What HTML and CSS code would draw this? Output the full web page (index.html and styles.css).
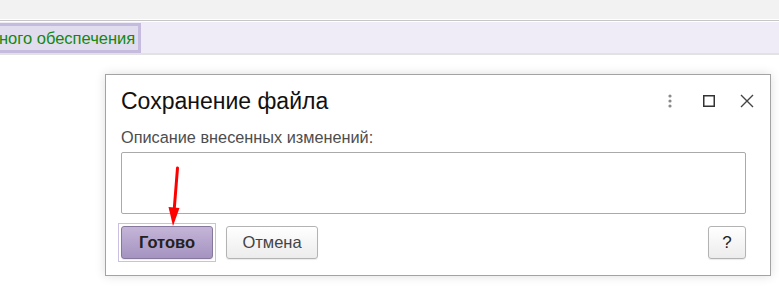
FILE: index.html
```html
<!DOCTYPE html>
<html lang="ru">
<head>
<meta charset="utf-8">
<link rel="stylesheet" href="styles.css">
</head>
<body>
<div class="topbar"></div>
<div class="band">
  <div class="tab">ного обеспечения</div>
</div>
<div class="dialog">
  <div class="header">
    <div class="title">Сохранение файла</div>
    <div class="tools">
      <svg class="ico-more" width="6" height="16" viewBox="0 0 6 16"><circle cx="3" cy="3" r="1.6" fill="#8a8a8a"/><circle cx="3" cy="8" r="1.6" fill="#8a8a8a"/><circle cx="3" cy="13" r="1.6" fill="#8a8a8a"/></svg>
      <svg class="ico-max" width="12" height="12" viewBox="0 0 12 12"><rect x="0.75" y="0.75" width="10.5" height="10.5" fill="none" stroke="#333" stroke-width="1.5"/></svg>
      <svg class="ico-close" width="14" height="14" viewBox="0 0 14 14"><path d="M1 1L13 13M13 1L1 13" stroke="#444" stroke-width="1.4" fill="none"/></svg>
    </div>
  </div>
  <div class="label">Описание внесенных изменений:</div>
  <div class="textarea"></div>
  <div class="footer">
    <div class="focus"><button class="btn primary">Готово</button></div>
    <button class="btn">Отмена</button>
    <div class="spacer"></div>
    <button class="btn help">?</button>
  </div>
</div>
<svg class="arrow" width="20" height="64" viewBox="0 0 20 64"><path d="M11.5 2L8 46" stroke="#ff0000" stroke-width="3" fill="none" stroke-linecap="round"/><path d="M2.5 41L13.5 42L7 60Z" fill="#ff0000"/></svg>
</body>
</html>
```
FILE: styles.css
```css
html, body { margin: 0; padding: 0; }
body {
  width: 779px; height: 292px; overflow: hidden;
  background: #fff;
  font-family: "Liberation Sans", Arial, sans-serif;
  position: relative;
}
.topbar {
  height: 19px;
  background: #f2f2f2;
  border-bottom: 1px solid #fff;
}
.band {
  border-top: 1px solid #c6c6c6;
  box-shadow: inset 0 1px 0 #fff;
  padding-top: 2px;
  background: #efecf7;
  height: 30px;
  border-bottom: 2px solid #e2e2e2;
  display: flex;
}
.tab {
  box-sizing: border-box;
  height: 30px;
  width: 141px;
  background: #e1ddef;
  border: 3px solid #c4bbdf;
  border-left: none;
  color: #13880f;
  font-size: 16.5px;
  line-height: 24px;
  white-space: nowrap;
  overflow: hidden;
  text-indent: -1px;
}
.dialog {
  position: absolute;
  left: 105px; top: 74px;
  width: 666px; height: 202px;
  background: #fff;
  border: 1px solid #a3a3a3;
  box-shadow: 0 0 10px rgba(0,0,0,0.13);
  padding: 0 24px 0 15px;
  box-sizing: border-box;
  display: flex;
  flex-direction: column;
}
.header {
  height: 52px;
  display: flex;
  align-items: center;
}
.title {
  font-size: 23px;
  color: #111;
  flex: 1;
}
.tools {
  display: flex;
  align-items: center;
  margin-right: -8px;
}
.ico-more { margin-right: 30px; }
.ico-max { margin-right: 25px; }
.label {
  font-size: 16.3px;
  color: #4d4d4d;
  line-height: 18px;
  height: 18px;
  margin-top: 1px;
  margin-bottom: 6px;
}
.textarea {
  height: 62px;
  border: 1px solid #aaa;
  border-radius: 2px;
  box-sizing: border-box;
}
.footer {
  display: flex;
  align-items: center;
  margin-top: 9px;
}
.focus {
  border: 1px solid #cbbfe4;
  padding: 2px;
  margin-left: -3px;
  margin-right: 10px;
  display: flex;
}
.btn {
  width: 92px; height: 33px;
  box-sizing: border-box;
  font-family: "Liberation Sans", Arial, sans-serif;
  font-size: 16.5px;
  color: #444;
  background: linear-gradient(#ffffff, #ececec);
  border: 1px solid #b3b3b3;
  border-radius: 3px;
  padding: 0;
  box-shadow: 0 1px 1px rgba(0,0,0,0.08);
}
.btn.primary {
  background: linear-gradient(#c4b5d8, #a593c0);
  border: 1px solid #86779c;
  color: #222;
  font-weight: bold;
}
.spacer { flex: 1; }
.btn.help {
  width: 38px;
  font-size: 17px;
  color: #222;
}
.arrow {
  position: absolute;
  left: 166px; top: 166px;
}
```
